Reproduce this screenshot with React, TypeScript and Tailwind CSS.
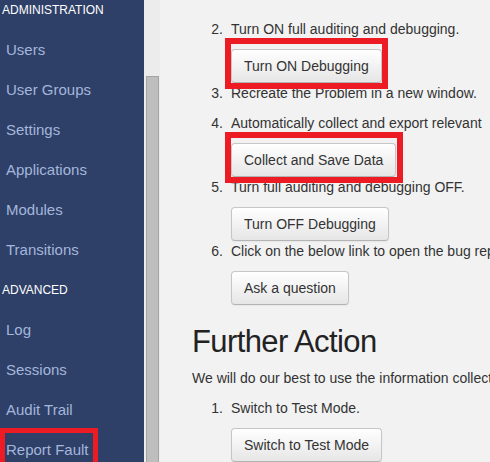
import React from "react";

const font = { fontFamily: '"Liberation Sans", Arial, sans-serif' };

const Btn = ({ label, marked, wide }: { label: string; marked?: boolean; wide?: boolean }) => (
    <div className="relative mt-[10px] inline-flex self-start">
        <button className="h-[34px] px-[12px] rounded-[4px] border border-[#c6c6c6] border-b-[#b3b3b3] bg-gradient-to-b from-white to-[#e6e6e6] text-[14px] text-[#333] whitespace-nowrap shadow-[inset_0_1px_0_rgba(255,255,255,0.2),0_1px_2px_rgba(0,0,0,0.05)]">
            {label}
        </button>
        {marked && (
            <div className={"absolute -left-[6px] -top-[11px] -bottom-[6px] border-[6px] border-[#ed1c24] pointer-events-none z-10 " + (wide ? "-right-[7px]" : "-right-[6px]")} />
        )}
    </div>
);

const Step = ({ n, text, btn, marked, wide }: { n: number; text: string; btn?: string; marked?: boolean; wide?: boolean }) => (
    <li className={"flex flex-col " + (btn ? "" : "mb-[10px]")}>
        <div className="flex h-[20px] items-center whitespace-nowrap">
            <span className="w-[31px] shrink-0 text-right">{n}.</span>
            <span className="ml-[8px] shrink-0">{text}</span>
        </div>
        {btn && (
            <div className="flex pl-[39px]">
                <Btn label={btn} marked={marked} wide={wide} />
            </div>
        )}
    </li>
);

const adminItems = ["Users", "User Groups", "Settings", "Applications", "Modules", "Transitions"];
const advancedItems = ["Log", "Sessions", "Audit Trail"];

export default function App() {
    return (
        <div className="flex h-[462px] w-[490px] overflow-hidden" style={font}>
            {/* SIDEBAR */}
            <div className="w-[144px] shrink-0 bg-[#2e4067]">
                <div className="-mt-[10px] flex flex-col">
                    <div className="h-[40px] flex items-center pl-[2px] text-[12px] text-white">ADMINISTRATION</div>
                    {adminItems.map((item) => (
                        <div key={item} className="h-[40px] flex items-center pl-[6px] text-[15px] text-[#a4b6dc]">{item}</div>
                    ))}
                    <div className="h-[40px] flex items-center pl-[2px] text-[12px] text-white">ADVANCED</div>
                    {advancedItems.map((item) => (
                        <div key={item} className="h-[40px] flex items-center pl-[6px] text-[15px] text-[#a4b6dc]">{item}</div>
                    ))}
                    <div className="relative h-[40px] flex items-center pl-[6px] text-[15px] text-[#a4b6dc]">
                        Report Fault
                        <div className="absolute left-0 top-[-2px] w-[98px] h-[60px] border-[5px] border-[#ed1c24]" />
                    </div>
                </div>
            </div>
            {/* SCROLLBAR */}
            <div className="w-[16px] shrink-0 bg-[#ececec]">
                <div className="mt-[76px] ml-[2px] w-[13px] h-[400px] bg-[#bebebe] border border-[#a4a4a4]" />
            </div>
            {/* MAIN */}
            <div className="min-w-0 flex-1 overflow-hidden bg-[#f2f2f2] pl-[32px] pt-[19px] text-[14px] text-[#333]">
                <ol className="flex flex-col">
                    <Step n={2} text="Turn ON full auditing and debugging." btn="Turn ON Debugging" marked />
                    <Step n={3} text="Recreate the Problem in a new window." />
                    <Step n={4} text="Automatically collect and export relevant" btn="Collect and Save Data" marked wide />
                    <Step n={5} text="Turn full auditing and debugging OFF." btn="Turn OFF Debugging" />
                    <Step n={6} text="Click on the below link to open the bug report." btn="Ask a question" />
                </ol>
                <h2 className="mt-[17px] h-[40px] leading-[40px] text-[31px] tracking-[-0.6px] text-[#222] whitespace-nowrap">Further Action</h2>
                <p className="mt-[6px] h-[20px] leading-[20px] whitespace-nowrap">We will do our best to use the information collected.</p>
                <ol className="mt-[10px] flex flex-col">
                    <Step n={1} text="Switch to Test Mode." btn="Switch to Test Mode" />
                </ol>
            </div>
        </div>
    );
}
